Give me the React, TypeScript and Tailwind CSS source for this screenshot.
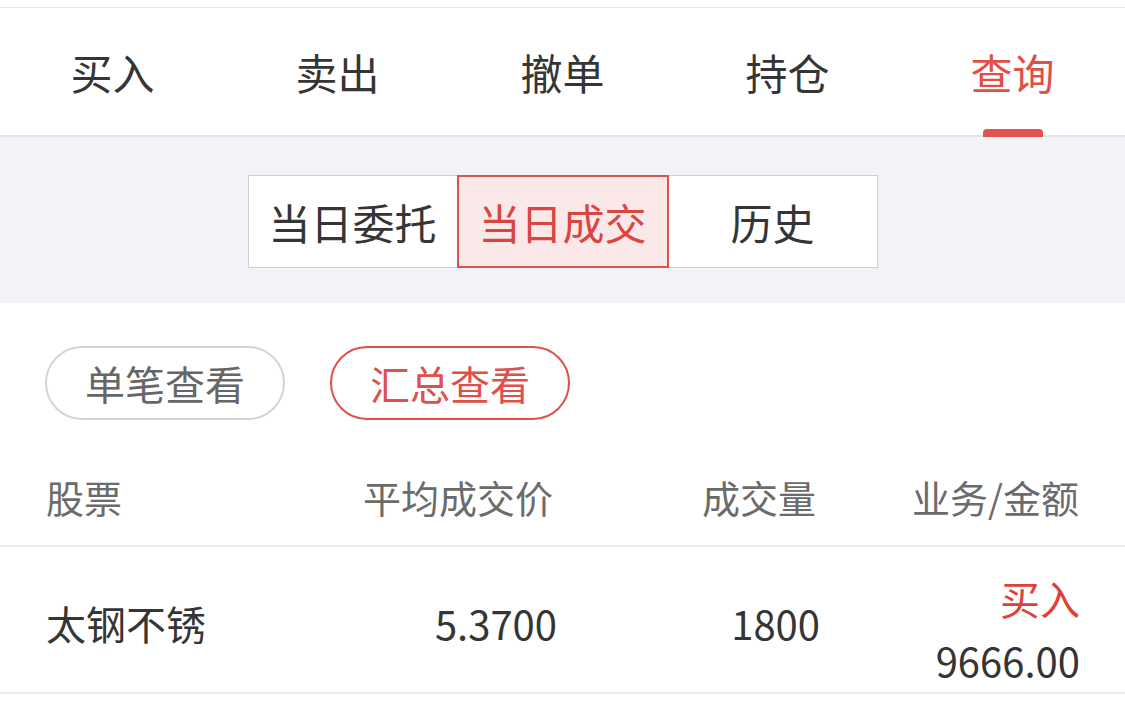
import { useState } from "react";

const tabs = ["买入", "卖出", "撤单", "持仓", "查询"];
const segments = ["当日委托", "当日成交", "历史"];

export default function App() {
  const [tab] = useState(4);
  const [seg] = useState(1);
  const [mode] = useState(1);

  return (
    <div className="w-[1125px] h-[706px] overflow-hidden bg-white font-['Noto_Sans_CJK_SC','Noto_Sans',sans-serif] text-[#353535]">
      <div className="h-[8px] border-b border-[#e6e6e6]" />

      {/* top tabs */}
      <div className="grid grid-cols-5 h-[129px] border-b-2 border-[#e3e4ea]">
        {tabs.map((t, i) => (
          <div key={t} className="relative flex items-center justify-center">
            <span className={`text-[42px] leading-none ${i === tab ? "text-[#e0504b]" : "text-[#353535]"}`}>{t}</span>
            {i === tab && (
              <div className="absolute bottom-[-2px] left-1/2 -translate-x-1/2 w-[60px] h-[8px] rounded-t-[4px] bg-[#e0534e]" />
            )}
          </div>
        ))}
      </div>

      {/* segmented control */}
      <div className="bg-[#f2f3f7] h-[166px] flex items-center justify-center pt-[3px]">
        <div className="flex w-[630px] h-[93px] border border-[#cfcfd3] bg-white">
          {segments.map((s, i) => (
            <div
              key={s}
              className={
                i === seg
                  ? "flex-1 -my-px flex items-center justify-center border-2 border-[#d9534f] bg-[#fbe8e8] text-[#d9453f] text-[42px]"
                  : "flex-1 flex items-center justify-center text-[#353535] text-[42px]"
              }
            >
              {s}
            </div>
          ))}
        </div>
      </div>

      {/* pills */}
      <div className="flex gap-[45px] px-[45px] pt-[43px]">
        <div
          className={`w-[240px] h-[74px] rounded-full border-2 flex items-center justify-center text-[40px] ${
            mode === 0 ? "border-[#e0504b] text-[#e0504b]" : "border-[#d4d4d4] text-[#666]"
          }`}
        >
          单笔查看
        </div>
        <div
          className={`w-[240px] h-[74px] rounded-full border-2 flex items-center justify-center text-[40px] ${
            mode === 1 ? "border-[#e0504b] text-[#e0504b]" : "border-[#d4d4d4] text-[#666]"
          }`}
        >
          汇总查看
        </div>
      </div>

      {/* table header */}
      <div className="grid grid-cols-[1fr_263px_263px_263px] items-center px-[46px] h-[127px] pt-[28px] border-b-2 border-[#ececec] text-[38px] text-[#6b6b6b]">
        <span>股票</span>
        <span className="text-right">平均成交价</span>
        <span className="text-right">成交量</span>
        <span className="text-right">业务/金额</span>
      </div>

      {/* row */}
      <div className="grid grid-cols-[1fr_263px_263px_263px] items-center pl-[46px] pr-[45px] h-[147px] pt-[6px] border-b-2 border-[#ececec] text-[40px] text-[#353535]">
        <span>太钢不锈</span>
        <span className="text-right mr-[-3px]">5.3700</span>
        <span className="text-right mr-[-3px]">1800</span>
        <div className="flex flex-col items-end mt-[12px] leading-[62px]">
          <span className="text-[#e0403a]">买入</span>
          <span>9666.00</span>
        </div>
      </div>
    </div>
  );
}
